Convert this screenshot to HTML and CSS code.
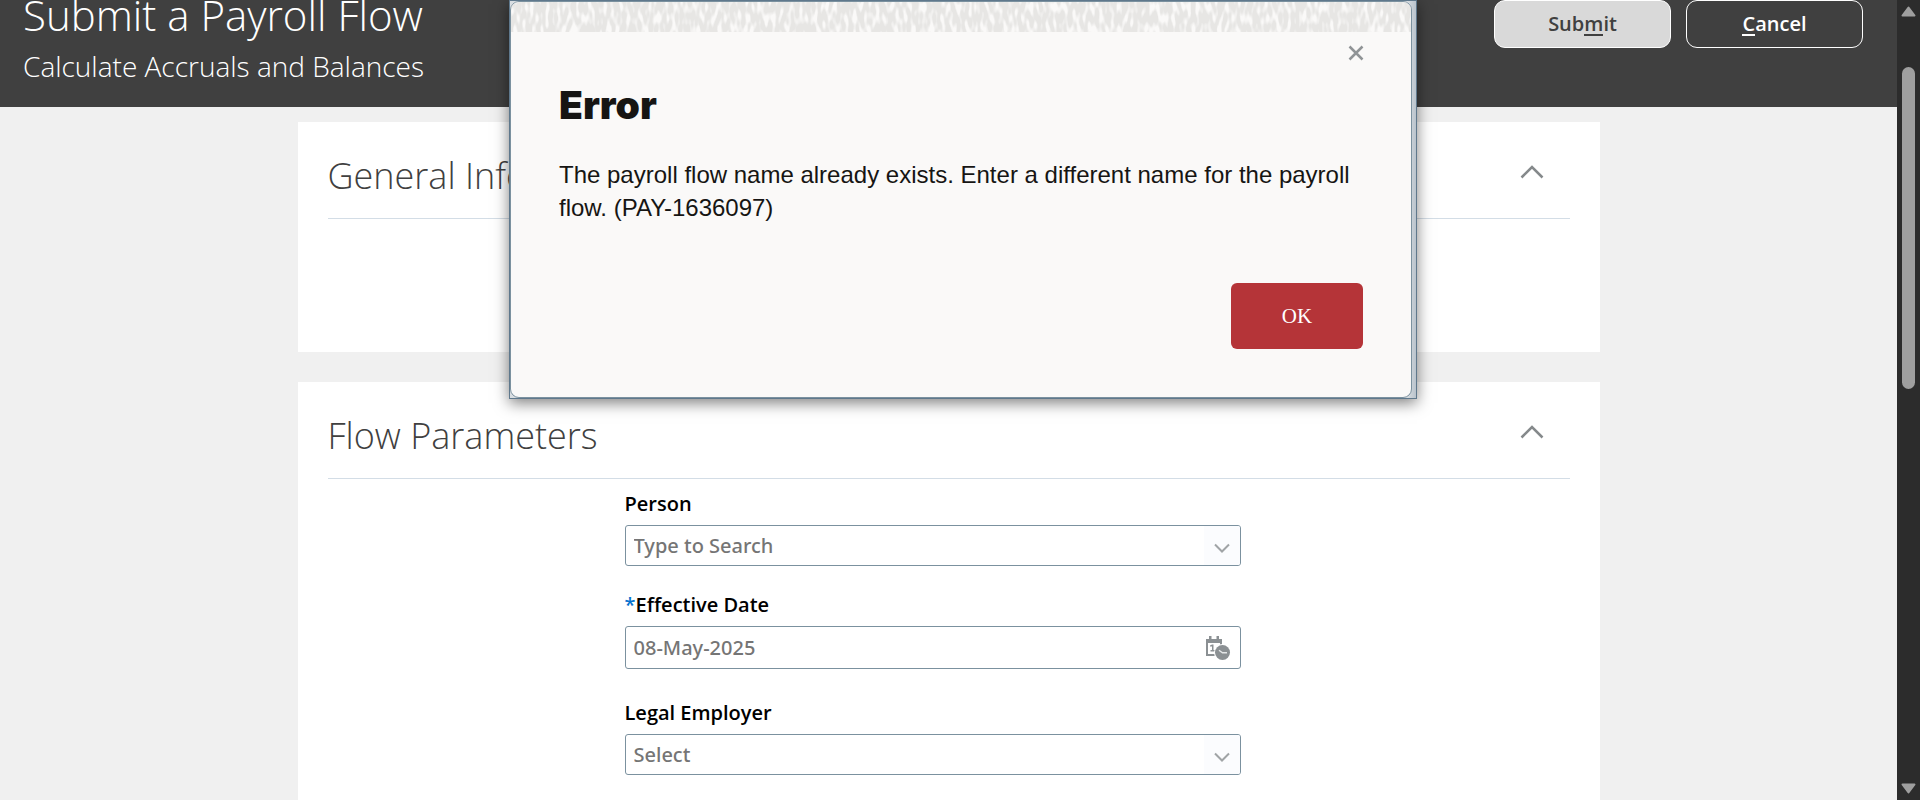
FILE: index.html
```html
<!DOCTYPE html>
<html lang="en">
<head>
<meta charset="utf-8">
<title>Submit a Payroll Flow</title>
<link rel="stylesheet" href="styles.css">
</head>
<body>
<div class="shell">
  <div class="page">
    <header class="header">
      <div class="titles">
        <h1 class="title">Submit a Payroll Flow</h1>
        <p class="subtitle">Calculate Accruals and Balances</p>
      </div>
      <div class="actions">
        <button class="btn btn-submit" type="button" accesskey="m"><span>Sub<span class="key">m</span>it</span></button>
        <button class="btn btn-cancel" type="button" accesskey="c"><span><span class="key">C</span>ancel</span></button>
      </div>
    </header>
    <main class="content">
      <section class="card card-general">
        <div class="card-head">
          <h2 class="card-title">General Information</h2>
          <button class="collapse" type="button" aria-label="Collapse General Information">
            <svg width="24" height="16" viewBox="0 0 24 16"><path d="M1.500 13.500 12 3l10.500 10.500"/></svg>
          </button>
        </div>
      </section>
      <section class="card">
        <div class="card-head">
          <h2 class="card-title">Flow Parameters</h2>
          <button class="collapse" type="button" aria-label="Collapse Flow Parameters">
            <svg width="24" height="16" viewBox="0 0 24 16"><path d="M1.500 13.500 12 3l10.500 10.500"/></svg>
          </button>
        </div>
        <form class="form">
          <div class="field">
            <label class="label" for="person">Person</label>
            <div class="control">
              <input class="input" id="person" type="text" placeholder="Type to Search">
              <button class="drop" type="button" aria-label="Open Person list">
                <svg width="16" height="10" viewBox="0 0 16 10"><path d="M1 1.500 8 8.500l7-7"/></svg>
              </button>
            </div>
          </div>
          <div class="field field-date">
            <label class="label" for="date"><span class="required">*</span>Effective Date</label>
            <div class="control control-date">
              <input class="input" id="date" type="text" value="08-May-2025">
              <button class="calendar" type="button" aria-label="Select date and time">
                <svg width="26" height="26" viewBox="0 0 26 26">
                  <path fill="#8b9093" d="M1 3h3V0h2.500v3h5V0H14v3h3v6h-2V7H3v11h7v2H1z"/>
                  <path fill="#8b9093" d="M5 9.500 7 8.500h1.500V14H10v1.500H5.500V14H7v-3.500H5z"/>
                  <circle cx="17.500" cy="16.500" r="8.500" fill="#fff"/>
                  <circle cx="17.500" cy="16.500" r="7.500" fill="#8b9093"/>
                  <path d="m14 14.200 3.500 2.600h4.500" fill="none" stroke="#e4e6e7" stroke-width="1.400"/>
                </svg>
              </button>
            </div>
          </div>
          <div class="field">
            <label class="label" for="employer">Legal Employer</label>
            <div class="control">
              <select class="input" id="employer"><option>Select</option></select>
              <span class="drop drop-mark">
                <svg width="16" height="10" viewBox="0 0 16 10"><path d="M1 1.500 8 8.500l7-7"/></svg>
              </span>
            </div>
          </div>
        </form>
      </section>
    </main>
  </div>
  <div class="scroll">
    <svg width="15" height="11" viewBox="0 0 15 11"><path d="M7.500 1.500 13.500 9.500h-12z"/></svg>
    <div class="track"><div class="thumb"></div></div>
    <svg width="15" height="11" viewBox="0 0 15 11"><path d="M7.500 9.500 13.500 1.500h-12z"/></svg>
  </div>
</div>

<div class="dialog" role="dialog" aria-labelledby="dialog-title" aria-describedby="dialog-text">
  <div class="dialog-body">
    <svg class="texture" aria-hidden="true">
      <filter id="grain" x="0" y="0" width="100%" height="100%" color-interpolation-filters="sRGB">
        <feTurbulence type="fractalNoise" baseFrequency="0.26 0.09" numOctaves="1" seed="7"/>
        <feColorMatrix values="0 0 0 0 0.905  0 0 0 0 0.902  0 0 0 0 0.895  5 0 0 0 -1.700"/>
      </filter>
      <rect width="100%" height="100%" filter="url(#grain)"/>
    </svg>
    <div class="dialog-top">
      <button class="close" type="button" aria-label="Close">
        <svg width="16" height="16" viewBox="0 0 16 16"><path d="m1.500 1.500 13 13m0-13-13 13"/></svg>
      </button>
    </div>
    <div class="dialog-main">
      <h2 class="dialog-title" id="dialog-title">Error</h2>
      <p class="dialog-text" id="dialog-text">The payroll flow name already exists. Enter a different name for the payroll flow. (PAY-1636097)</p>
      <div class="dialog-foot"><button class="ok" type="button">OK</button></div>
    </div>
  </div>
</div>
</body>
</html>
```
FILE: styles.css
```css
* { box-sizing: border-box; }
body {
  margin: 0;
  height: 100vh;
  overflow: hidden;
  font-family: "Open Sans", "Noto Sans", sans-serif;
  background: #f0f0f0;
}
h1, h2, p { margin: 0; }
button { font: inherit; padding: 0; border: 0; background: none; cursor: pointer; }
svg { display: block; }

.shell { display: flex; height: 100%; }
.page { flex: 1; min-width: 0; overflow: hidden; }

.header {
  display: flex;
  justify-content: space-between;
  align-items: flex-start;
  padding: 0 34px 21px 23px;
  background: #404040;
  color: #fff;
}
.title { font-size: 42px; font-weight: 300; line-height: 30px; }
.subtitle { padding-top: 16px; font-size: 28px; font-weight: 300; line-height: 40px; }
.actions { display: flex; gap: 15px; }
.btn {
  width: 177px;
  height: 48px;
  border: 1px solid #fff;
  border-radius: 11px;
  padding-bottom: 2px;
  font-size: 20px;
  font-weight: 600;
}
.btn-submit { background: #d9d9d9; color: #404040; }
.btn-cancel { color: #fff; }
.key { display: inline-block; line-height: 20px; border-bottom: 2px solid; }

.content {
  display: flex;
  flex-direction: column;
  gap: 30px;
  max-width: 1302px;
  margin: 15px auto 0;
}
.card { padding: 0 30px 60px; background: #fff; }
.card-general { padding-bottom: 133px; }
.card-head {
  display: flex;
  justify-content: space-between;
  align-items: center;
  padding: 24px 26px 12px 0;
  border-bottom: 1px solid #d3dde6;
}
.card-title { font-size: 36px; font-weight: 300; line-height: 60px; color: #404040; }
.collapse svg { margin-bottom: 8px; }
.collapse path { fill: none; stroke: #85898b; stroke-width: 2.5; }

.form { width: 648px; margin: 0 auto; padding: 11px 32px 0 0; }
.field { margin-bottom: 25px; }
.field-date { margin-bottom: 30px; }
.label { display: block; height: 35px; font-size: 20px; font-weight: 600; line-height: 28px; color: #000; }
.required { color: #0572ce; }
.control {
  display: flex;
  position: relative;
  height: 41px;
  border: 1px solid #7b919f;
  border-radius: 3px;
  background: #fff;
  overflow: hidden;
}
.control-date { height: 43px; }
.input {
  flex: 1;
  min-width: 0;
  padding: 0 8px;
  border: 0;
  outline: 0;
  background: none;
  appearance: none;
  font-family: "Noto Sans", sans-serif;
  font-size: 20px;
  font-weight: 500;
  color: #757575;
}
.input::placeholder { color: #757575; opacity: 1; }
.drop { display: flex; align-items: center; justify-content: center; width: 36px; padding-top: 4px; background: #fbfcfe; }
.drop-mark { pointer-events: none; }
.drop path { fill: none; stroke: #a0a4a6; stroke-width: 2; }
.calendar { padding: 2px 9px 0 0; }

.scroll {
  display: flex;
  flex-direction: column;
  align-items: center;
  width: 23px;
  padding: 6px 0;
  background: #2c2c2c;
}
.scroll path { fill: #9f9f9f; stroke: #9f9f9f; stroke-width: 2; stroke-linejoin: round; }
.track { flex: 1; padding-top: 50px; }
.thumb { width: 13px; height: 45%; border-radius: 7px; background: #9f9f9f; }

.dialog {
  position: fixed;
  top: 0;
  left: 50%;
  width: 908px;
  margin-left: -451px;
  padding-right: 4px;
  border: 1px solid #5f788c;
  background: linear-gradient(90deg, #d8dde1 99%, #b9c3cc);
  box-shadow: 0 4px 14px rgba(0, 0, 0, 0.5);
}
.dialog-body {
  border: 1px solid #7b919f;
  border-radius: 9px;
  background: #faf9f8;
  overflow: hidden;
}
.texture { width: 100%; height: 30px; }
.dialog-top { display: flex; justify-content: flex-end; padding: 13px 47px 0 0; }
.close path { fill: none; stroke: #909496; stroke-width: 2.5; }
.dialog-main { padding: 21px 48px 48px; }
.dialog-title { font-family: Inter, sans-serif; font-size: 39px; font-weight: 900; line-height: 46px; color: #161513; }
.dialog-text { padding-top: 30px; font-family: "Liberation Sans", Arial, sans-serif; font-size: 24px; line-height: 33px; color: #161513; }
.dialog-foot { display: flex; justify-content: flex-end; padding-top: 59px; }
.ok {
  width: 132px;
  height: 66px;
  border-radius: 6px;
  background: #b53438;
  color: #fff;
  font-family: "Liberation Serif", serif;
  font-size: 21px;
}
```
